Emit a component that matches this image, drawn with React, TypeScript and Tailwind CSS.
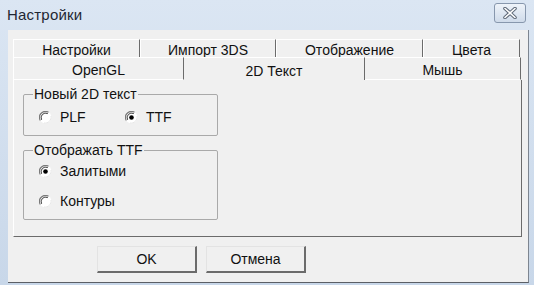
import React from 'react';

const font = { fontFamily: '"Liberation Sans", Arial, sans-serif' };

function Radio({ checked }: { checked?: boolean }) {
  return (
    <span className="relative inline-block w-[13px] h-[13px] shrink-0">
      <svg width="13" height="13" viewBox="0 0 13 13" className="absolute inset-0">
        <circle cx="6.5" cy="6.5" r="6" fill="#ffffff" />
        <path d="M1.3 9.5 A6 6 0 0 1 9.5 1.3" fill="none" stroke="#7a7a7a" strokeWidth="1.2" />
        <path d="M2.6 8.8 A4.6 4.6 0 0 1 8.8 2.6" fill="none" stroke="#3c3c3c" strokeWidth="1" />
        <path d="M12 5 A6 6 0 0 1 5 12" fill="none" stroke="#e6e6e6" strokeWidth="1" />
        {checked && <circle cx="6.5" cy="6.5" r="2.3" fill="#000000" />}
      </svg>
    </span>
  );
}

function Tab({ label, w }: { label: string; w: number }) {
  return (
    <div
      style={{ width: w }}
      className="h-[18px] flex items-center justify-center pt-[3px] border-t border-l border-t-white border-l-white border-r border-r-[#6b6b6b]"
    >
      {label}
    </div>
  );
}

export default function App() {
  return (
    <div
      className="w-[534px] h-[285px] bg-gradient-to-b from-[#dbe6f3] to-[#c8d7e9] flex flex-col text-[14px] text-[#111] overflow-hidden"
      style={font}
    >
      {/* title bar */}
      <div className="h-[30px] shrink-0 flex items-center justify-between pl-[7px] pr-[8px]">
        <span className="text-[15px] text-[#1f2733] tracking-[0.2px]">Настройки</span>
        <div className="w-[32px] h-[20px] -mt-[4px] rounded-[3px] border border-[#8797ad] bg-gradient-to-b from-[#eef3f9] to-[#cfdbea] flex items-center justify-center">
          <svg width="16" height="12" viewBox="0 0 16 12">
            <path d="M3 1.5 L13 10.5 M13 1.5 L3 10.5" stroke="#5d6877" strokeWidth="3.6" strokeLinecap="round" />
            <path d="M3 1.5 L13 10.5 M13 1.5 L3 10.5" stroke="#ffffff" strokeWidth="1.6" strokeLinecap="round" />
          </svg>
        </div>
      </div>

      {/* client area */}
      <div className="flex-1 ml-[8px] mr-[5px] mb-[2px] bg-[#f0f0f0] border-r border-b border-r-[#7d8590] border-b-[#5b5f66] flex flex-col">
        <div className="pl-[5px] pt-[9px]">
          {/* tabs row 1 */}
          <div className="flex h-[18px]">
            <Tab label="Настройки" w={127} />
            <Tab label="Импорт 3DS" w={136} />
            <Tab label="Отображение" w={147} />
            <Tab label="Цвета" w={97} />
          </div>
          {/* tabs row 2 */}
          <div className="flex h-[23px]">
            <div className="w-[171px] h-[23px] flex items-center justify-center pt-[4px] border-t border-l border-t-white border-l-white border-r border-r-[#6b6b6b] border-b border-b-white">
              OpenGL
            </div>
            <div className="w-[181px] h-[23px] flex items-center justify-center pt-[4px] border-t border-t-white border-r border-r-[#6b6b6b]">
              2D Текст
            </div>
            <div className="w-[156px] h-[23px] flex items-center justify-center pt-[4px] border-t border-t-white border-r border-r-[#6b6b6b] border-b border-b-white">
              Мышь
            </div>
          </div>
          {/* panel */}
          <div className="w-[509px] h-[157px] border-l border-l-white border-r border-r-[#6b6b6b] border-b border-b-[#6b6b6b] pl-[9px] pt-[7px] flex flex-col gap-[7px]">
            <fieldset className="w-[195px] h-[49px] border border-[#a9a9a9] rounded-[2px] px-[10px] pb-0 m-0">
              <legend className="px-[1px] -ml-[1px] leading-[14px]">Новый 2D текст</legend>
              <div className="flex items-center h-[26px] mt-[3px] pl-[5px]">
                <label className="flex items-center gap-[8px] w-[86px]">
                  <Radio />
                  <span>PLF</span>
                </label>
                <label className="flex items-center gap-[8px]">
                  <Radio checked />
                  <span>TTF</span>
                </label>
              </div>
            </fieldset>
            <fieldset className="w-[195px] h-[77px] border border-[#a9a9a9] rounded-[2px] px-[10px] m-0">
              <legend className="px-[1px] -ml-[1px] leading-[14px]">Отображать TTF</legend>
              <div className="flex flex-col pl-[5px] gap-[14px] pt-[6px]">
                <label className="flex items-center gap-[8px] h-[16px]">
                  <Radio checked />
                  <span>Залитыми</span>
                </label>
                <label className="flex items-center gap-[8px] h-[16px]">
                  <Radio />
                  <span>Контуры</span>
                </label>
              </div>
            </fieldset>
          </div>
        </div>

        {/* buttons */}
        <div className="flex gap-[9px] pl-[89px] pt-[9px]">
          <button className="w-[100px] h-[27px] bg-[#f0f0f0] border-t border-l border-t-[#e3e3e3] border-l-[#e3e3e3] border-r-2 border-b-2 border-r-[#6b6b6b] border-b-[#6b6b6b]">
            OK
          </button>
          <button className="w-[100px] h-[27px] bg-[#f0f0f0] border-t border-l border-t-[#e3e3e3] border-l-[#e3e3e3] border-r-2 border-b-2 border-r-[#6b6b6b] border-b-[#6b6b6b]">
            Отмена
          </button>
        </div>
      </div>
    </div>
  );
}
